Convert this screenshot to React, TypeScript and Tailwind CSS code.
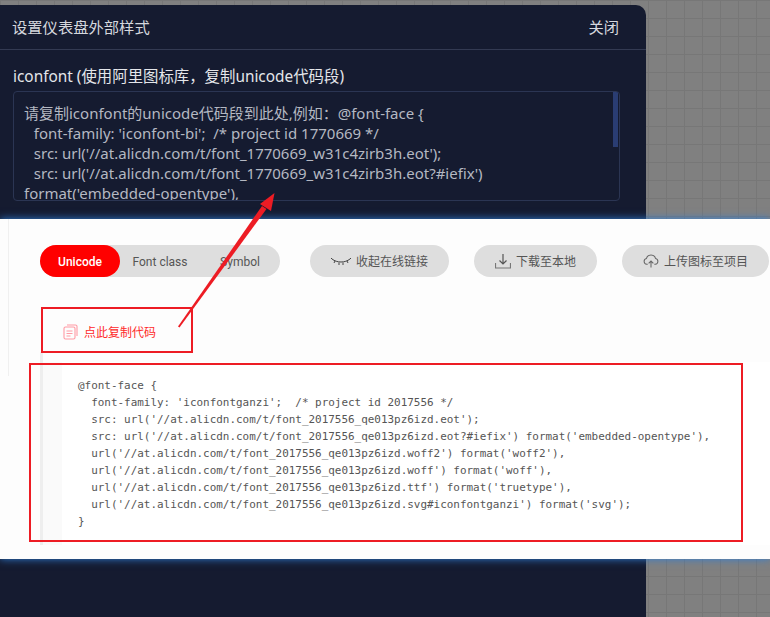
import React from 'react';

const mono = "font-['DejaVu_Sans_Mono','Liberation_Mono',monospace]";

const codeLines = [
  "@font-face {",
  "  font-family: 'iconfontganzi';  /* project id 2017556 */",
  "  src: url('//at.alicdn.com/t/font_2017556_qe013pz6izd.eot');",
  "  src: url('//at.alicdn.com/t/font_2017556_qe013pz6izd.eot?#iefix') format('embedded-opentype'),",
  "  url('//at.alicdn.com/t/font_2017556_qe013pz6izd.woff2') format('woff2'),",
  "  url('//at.alicdn.com/t/font_2017556_qe013pz6izd.woff') format('woff'),",
  "  url('//at.alicdn.com/t/font_2017556_qe013pz6izd.ttf') format('truetype'),",
  "  url('//at.alicdn.com/t/font_2017556_qe013pz6izd.svg#iconfontganzi') format('svg');",
  "}",
];

const textareaLines = [
  "请复制iconfont的unicode代码段到此处,例如：@font-face {",
  "  font-family: 'iconfont-bi';  /* project id 1770669 */",
  "  src: url('//at.alicdn.com/t/font_1770669_w31c4zirb3h.eot');",
  "  src: url('//at.alicdn.com/t/font_1770669_w31c4zirb3h.eot?#iefix')",
  "format('embedded-opentype'),",
];

const Pill = ({ icon, label, className }: { icon: React.ReactNode; label: string; className: string }) => (
  <div className={`h-8 rounded-2xl bg-[#dedede] flex items-center justify-center gap-[5px] text-[12px] text-[#555] ${className}`}>
    {icon}
    <span className="pt-[2px]">{label}</span>
  </div>
);

export default function App() {
  return (
    <div className="relative w-[770px] h-[617px] overflow-hidden bg-[#808080] bg-[linear-gradient(#777_1px,transparent_1px),linear-gradient(90deg,#777_1px,transparent_1px)] bg-[size:18px_18px] font-['Noto_Sans','Noto_Sans_CJK_SC',sans-serif]">
      <div className="h-[219px] pt-[5px]">
        <div className="w-[646px] h-[214px] bg-[#151b30] rounded-tr-[10px]">
          <div className="h-[45px] border-b border-[#333a52] flex items-center justify-between pl-[12px] pr-[27px] pt-[1px] text-[15.300px] text-[#d5d8de]">
            <span>设置仪表盘外部样式</span>
            <span>关闭</span>
          </div>
          <div className="pl-[13px] pr-[26px] pt-[16px]">
            <div className="text-[15.400px] leading-[22px] text-[#e4e6ea]">iconfont (使用阿里图标库，复制unicode代码段)</div>
            <div className="relative mt-[3px] h-[110px] overflow-hidden rounded border border-[#2b3553] pl-[10px] pt-[11px] text-[15px] leading-[20px] text-[#b4b8c2] whitespace-pre">
              {textareaLines.map((l) => (
                <div key={l} className={l.startsWith(' ') ? 'pl-[2px]' : ''}>{l}</div>
              ))}
              <div className="absolute right-[1px] top-0 w-[5px] h-[55px] bg-[#2a3d73]" />
            </div>
          </div>
        </div>
      </div>

      <div className="relative z-10 h-[340px] bg-[#fdfdfd] shadow-[0_0_8px_#2f7fd8]">
        <div className="absolute left-[8px] top-0 w-px h-[157px] bg-[#f0f0f0]" />
        <div className="absolute left-[40px] top-[133px] w-[3px] h-[193px] bg-[#eeeeee]" />
        <div className="flex items-start h-[143px] pt-[26px] pl-[40px]">
          <div className="w-[240px] h-8 rounded-2xl bg-[#dedede] flex items-center text-[12px] text-[#555] font-['Roboto','Liberation_Sans',sans-serif]">
            <div className="w-[80px] h-8 rounded-2xl bg-[#ff0000] text-white font-medium flex items-center justify-center pt-[2px]">Unicode</div>
            <div className="w-[80px] text-center pt-[2px]">Font class</div>
            <div className="w-[80px] text-center pt-[2px]">Symbol</div>
          </div>
          <Pill
            className="ml-[30px] w-[139px]"
            label="收起在线链接"
            icon={
              <svg width="20" height="10" viewBox="0 0 20 10" fill="none" stroke="#444" strokeWidth="1">
                <path d="M1 3c5 4 13 4 18 0M4 5l-1 2M8 6.500V9M12 6.500V9M16 5l1 2M1 3L0 2M19 3l1-1" />
              </svg>
            }
          />
          <Pill
            className="ml-[25px] w-[123px]"
            label="下载至本地"
            icon={
              <svg width="16" height="16" viewBox="0 0 16 16" fill="none" stroke="#777" strokeWidth="1.200">
                <path d="M.500 10v5h15v-5" />
                <path d="M8 1v10M4.500 7.500L8 11l3.500-3.500" stroke="#555" />
              </svg>
            }
          />
          <Pill
            className="ml-[25px] w-[147px]"
            label="上传图标至项目"
            icon={
              <svg width="16" height="15" viewBox="0 0 17 15" fill="none" stroke="#666" strokeWidth="1.100">
                <path d="M5 10.500H4a3.200 3.200 0 0 1-.3-6.300 5 5 0 0 1 9.600 0 3.200 3.200 0 0 1-.3 6.300h-1" />
                <path d="M8.500 14V7M6 9.500L8.500 7 11 9.500" />
              </svg>
            }
          />
        </div>
        <div className="h-[183px] ml-[43px] bg-white flex">
          <div className="w-[19px] bg-[#fafafa]" />
          <pre className={`pl-[16px] pt-[15px] text-[10.950px] leading-[17px] text-[#555] ${mono}`}>
            {codeLines.join('\n')}
          </pre>
        </div>
      </div>

      <div className="h-[58px]">
        <div className="w-[646px] h-full bg-[#151b30]" />
      </div>

      {/* 标注 */}
      <div className="absolute z-20 left-[41px] top-[307px] w-[152px] h-[46px] border-[2px] border-[#ed1c24] flex items-center pl-[20px] pt-[3px] gap-[6px] text-[12px] text-[#ff2a2a]">
        <svg width="15" height="16" viewBox="0 0 15 16" fill="none" stroke="#ff9aa4" strokeWidth="1.100">
          <rect x="1" y="3" width="11" height="12" rx="1.500" />
          <path d="M4 1h8.500A1.500 1.500 0 0 1 14 2.500V12M3.500 7h6M3.500 9.500h6M3.500 12h4" />
        </svg>
        <span className="pt-[2px]">点此复制代码</span>
      </div>
      <div className="absolute z-20 left-[29px] top-[363px] w-[714px] h-[179px] border-[2px] border-[#ed1c24]" />
      <svg className="absolute z-20 left-0 top-0" width="770" height="617" fill="none">
        <path d="M178 326.500L179.500 327.500L266.500 209L262 206Z" fill="#ed1c24" />
        <path d="M274.500 193L260 204L271 211Z" fill="#ed1c24" />
      </svg>
    </div>
  );
}
